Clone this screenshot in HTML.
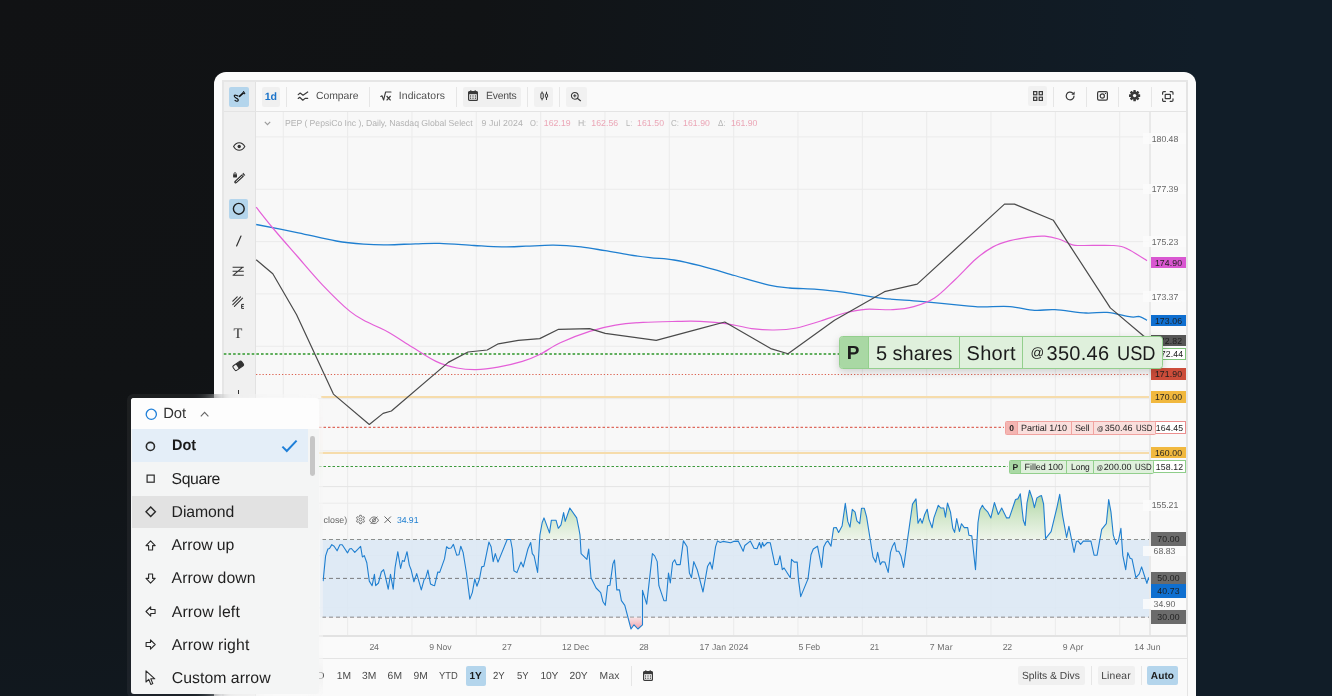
<!DOCTYPE html>
<html><head><meta charset="utf-8"><title>Chart</title>
<style>
html,body{margin:0;padding:0}
body{width:1332px;height:696px;overflow:hidden;position:relative;
 background:#111c27 radial-gradient(ellipse 1200px 1000px at 0 0,#111214 0%,#111315 40%,#111d28 100%);
 font-family:"Liberation Sans",sans-serif;}
.t{position:absolute;white-space:nowrap;text-rendering:geometricPrecision;}
.b{position:absolute;}
svg{position:absolute;overflow:visible}
#wrap{position:absolute;left:0;top:0;width:1332px;height:696px;will-change:transform;}
</style></head><body><div id="wrap">
<div class="b" style="left:214.0px;top:72.0px;width:982.0px;height:648.0px;background:#fbfbfb;border-radius:12px;"></div>
<div class="b" style="left:222.0px;top:80.0px;width:966.0px;height:640.0px;background:#e6e6e6;"></div>
<div class="b" style="left:223.5px;top:81.5px;width:963.0px;height:638.5px;background:#fafafa;"></div>
<div class="b" style="left:223.5px;top:81.5px;width:31.5px;height:638.5px;background:#f0f0f0;"></div>
<div class="b" style="left:255.0px;top:81.5px;width:1.0px;height:638.5px;background:#e2e2e2;"></div>
<div class="b" style="left:256.0px;top:81.5px;width:930.5px;height:29.0px;background:#fafafa;"></div>
<div class="b" style="left:223.5px;top:110.5px;width:963.0px;height:1.5px;background:#e4e4e4;"></div>
<div class="b" style="left:256.0px;top:112.0px;width:894.0px;height:523.5px;background:#f8f8f8;"></div>
<svg width="1332" height="696" viewBox="0 0 1332 696" style="left:0;top:0">
<defs><clipPath id="cp"><rect x="256" y="112" width="894" height="523.5"/></clipPath>
<linearGradient id="gg" gradientUnits="userSpaceOnUse" x1="0" y1="488" x2="0" y2="539.5"><stop offset="0" stop-color="#93c983" stop-opacity=".85"/><stop offset="1" stop-color="#e6f2e0" stop-opacity=".6"/></linearGradient>
<linearGradient id="rg" gradientUnits="userSpaceOnUse" x1="0" y1="617.2" x2="0" y2="629"><stop offset="0" stop-color="#f8dadd" stop-opacity=".7"/><stop offset="1" stop-color="#ee9aa6" stop-opacity=".95"/></linearGradient>
<clipPath id="c70"><rect x="256" y="480" width="894" height="59.5"/></clipPath>
<clipPath id="c30"><rect x="256" y="617.2" width="894" height="30"/></clipPath>
</defs>
<g stroke="#ebebeb" stroke-width="1">
<line x1="283.3" y1="112" x2="283.3" y2="635.5"/><line x1="347.6" y1="112" x2="347.6" y2="635.5"/><line x1="412.0" y1="112" x2="412.0" y2="635.5"/><line x1="476.3" y1="112" x2="476.3" y2="635.5"/><line x1="540.7" y1="112" x2="540.7" y2="635.5"/><line x1="605.0" y1="112" x2="605.0" y2="635.5"/><line x1="669.3" y1="112" x2="669.3" y2="635.5"/><line x1="733.7" y1="112" x2="733.7" y2="635.5"/><line x1="798.0" y1="112" x2="798.0" y2="635.5"/><line x1="862.4" y1="112" x2="862.4" y2="635.5"/><line x1="926.7" y1="112" x2="926.7" y2="635.5"/><line x1="991.0" y1="112" x2="991.0" y2="635.5"/><line x1="1055.4" y1="112" x2="1055.4" y2="635.5"/><line x1="1119.7" y1="112" x2="1119.7" y2="635.5"/><line x1="256" y1="136.9" x2="1150" y2="136.9"/><line x1="256" y1="189.3" x2="1150" y2="189.3"/><line x1="256" y1="241.6" x2="1150" y2="241.6"/><line x1="256" y1="293.9" x2="1150" y2="293.9"/><line x1="256" y1="346.3" x2="1150" y2="346.3"/><line x1="256" y1="398.6" x2="1150" y2="398.6"/><line x1="256" y1="450.9" x2="1150" y2="450.9"/><line x1="256" y1="503.2" x2="1150" y2="503.2"/><line x1="256" y1="555.6" x2="1150" y2="555.6"/><line x1="256" y1="607.9" x2="1150" y2="607.9"/><line x1="256" y1="486.6" x2="1150" y2="486.6" stroke="#e4e4e4"/></g>
<rect x="320" y="539.5" width="830" height="77.7" fill="#dbe8f5" opacity=".85"/>
<line x1="223.8" y1="354.1" x2="840" y2="354.1" stroke="#5fae5c" stroke-width="2" stroke-dasharray="2.6 2.05"/>
<line x1="256" y1="374.5" x2="1150" y2="374.5" stroke="#dc6453" stroke-width="1.1" stroke-dasharray="1.3 1.95"/>
<line x1="321" y1="397" x2="1150" y2="397" stroke="#f6dcab" stroke-width="2"/>
<line x1="256" y1="427.4" x2="1004" y2="427.4" stroke="#de6a5e" stroke-width="1.1" stroke-dasharray="2.5 2"/>
<line x1="256" y1="452.9" x2="1150" y2="452.9" stroke="#f6dcab" stroke-width="2"/>
<line x1="256" y1="466.5" x2="1008" y2="466.5" stroke="#3c9a3c" stroke-width="1.1" stroke-dasharray="2.5 2"/>
<line x1="322" y1="539.5" x2="1150" y2="539.5" stroke="#6a6a6a" stroke-opacity=".85" stroke-width="1" stroke-dasharray="4 3"/>
<line x1="322" y1="578.4" x2="1150" y2="578.4" stroke="#6a6a6a" stroke-opacity=".85" stroke-width="1" stroke-dasharray="4 3"/>
<line x1="322" y1="617.2" x2="1150" y2="617.2" stroke="#6a6a6a" stroke-opacity=".85" stroke-width="1" stroke-dasharray="4 3"/>
<path fill="none" stroke="#1f7fd0" stroke-width="1.3" d="M256.2 224.5 C263.2 225.9 285.0 230.1 298.3 232.8 C311.6 235.6 325.3 239.1 336.2 241.0 C347.1 242.9 355.2 243.5 363.8 244.1 C372.4 244.7 379.4 244.9 388.0 244.8 C396.6 244.8 406.9 244.0 415.5 243.8 C424.1 243.6 429.9 243.1 439.7 243.4 C449.4 243.7 463.7 244.9 474.0 245.5 C484.3 246.1 493.1 246.8 501.7 246.9 C510.3 247.0 517.3 246.5 525.9 246.2 C534.5 245.9 544.2 245.1 553.4 245.2 C562.6 245.3 572.4 246.0 581.0 246.9 C589.6 247.8 597.2 249.4 605.2 250.7 C613.2 252.0 621.8 253.7 629.3 254.8 C636.8 256.0 642.5 256.7 650.0 257.6 C657.5 258.5 665.7 258.6 674.0 260.0 C682.3 261.4 689.9 263.1 700.0 265.7 C710.1 268.3 723.0 272.2 734.5 275.5 C746.0 278.8 759.8 283.1 769.0 285.2 C778.2 287.3 781.7 287.3 789.7 288.0 C797.7 288.7 807.8 288.6 817.0 289.3 C826.2 290.0 833.8 290.9 844.8 292.4 C855.8 293.9 870.1 296.8 882.8 298.3 C895.4 299.8 906.3 300.1 920.7 301.4 C935.1 302.7 958.6 305.3 969.0 306.2 C979.4 307.1 976.0 306.8 982.8 306.9 C989.6 307.0 1001.4 306.0 1010.0 306.6 C1018.6 307.2 1027.0 309.8 1034.5 310.3 C1042.0 310.8 1046.4 309.2 1055.0 309.7 C1063.6 310.1 1077.3 312.6 1086.0 313.0 C1094.7 313.4 1099.5 311.8 1107.0 312.4 C1114.5 313.0 1125.5 316.2 1131.0 316.9 C1136.5 317.6 1137.0 316.0 1139.7 316.6 C1142.4 317.2 1145.8 319.7 1147.0 320.3"/>
<path fill="none" stroke="#e45fd8" stroke-width="1.2" d="M256.2 207.2 C259.0 210.7 266.1 219.9 272.8 228.0 C279.5 236.1 288.3 246.0 296.6 255.5 C304.9 265.0 313.5 275.5 322.4 284.8 C331.3 294.1 342.5 305.2 350.0 311.4 C357.5 317.6 360.9 318.6 367.2 322.0 C373.5 325.4 380.5 327.8 388.0 332.0 C395.5 336.2 404.0 342.1 412.0 347.0 C420.0 351.9 428.5 357.9 436.0 361.4 C443.5 364.9 450.3 366.6 457.0 368.0 C463.7 369.4 469.2 369.8 476.0 369.7 C482.8 369.6 490.3 368.6 498.0 367.2 C505.7 365.8 515.4 363.5 522.4 361.4 C529.4 359.3 533.4 357.6 539.7 354.5 C546.0 351.4 552.0 346.7 560.3 342.8 C568.6 338.9 580.5 334.3 589.7 331.4 C598.9 328.5 606.6 326.7 615.5 325.2 C624.4 323.7 632.6 323.0 643.0 322.4 C653.4 321.8 668.1 321.6 677.6 321.4 C687.1 321.2 691.7 321.0 700.0 321.4 C708.3 321.8 719.0 322.6 727.6 323.8 C736.2 325.0 744.0 327.6 751.7 328.6 C759.4 329.6 766.5 330.1 774.0 330.0 C781.5 329.9 788.8 329.5 796.6 328.0 C804.4 326.5 812.7 323.5 820.7 321.0 C828.7 318.5 837.3 314.9 844.8 313.0 C852.3 311.1 857.5 309.9 865.5 309.3 C873.5 308.8 885.0 310.1 893.0 309.7 C901.0 309.2 906.9 308.6 913.8 306.6 C920.7 304.7 927.6 302.5 934.5 298.0 C941.4 293.5 948.1 286.2 955.0 279.7 C961.9 273.2 969.6 264.5 975.9 259.0 C982.2 253.5 987.3 250.0 993.0 246.9 C998.7 243.8 1003.7 242.4 1010.0 240.7 C1016.3 239.0 1025.2 237.7 1031.0 236.9 C1036.8 236.2 1040.2 235.8 1044.8 236.2 C1049.4 236.5 1054.0 237.6 1058.6 239.0 C1063.2 240.4 1068.4 243.7 1072.4 244.8 C1076.4 245.9 1075.9 245.4 1082.8 245.5 C1089.7 245.6 1106.3 244.9 1113.8 245.5 C1121.3 246.1 1122.1 246.5 1127.6 249.0 C1133.1 251.5 1143.8 258.8 1147.0 260.7"/>
<polyline fill="none" stroke="#4a4a4a" stroke-width="1.2" stroke-linejoin="round" points="256.2,259.7 272.8,273.8 296.6,314.8 333.4,394.1 369.3,424.5 383.1,413.4 391.4,411.0 448.3,362.4 468.0,352.0 487.2,350.0 498.3,343.8 518.3,340.3 539.7,338.6 558.6,329.3 589.7,328.6 605.2,333.4 656.2,340.3 700.0,328.6 724.8,322.0 770.7,348.6 788.0,353.8 834.5,320.3 884.5,291.7 917.2,284.1 1004.5,204.1 1014.5,204.1 1053.4,220.3 1110.3,307.9 1143.0,335.5 1150.0,341.0"/>
<polygon points="323.1,539.5 323.1,581.1 325.6,555.9 327.9,549.0 329.5,548.5 331.8,544.6 334.1,546.2 337.1,550.8 339.9,544.8 342.2,544.8 344.5,548.3 347.5,552.9 349.5,549.0 351.4,548.5 354.8,552.4 360.6,546.4 362.4,557.0 364.3,555.6 366.8,562.8 369.3,581.1 372.1,585.7 374.4,574.3 375.7,585.7 378.5,583.0 381.3,572.0 383.6,569.7 385.4,576.6 388.2,589.2 390.5,574.3 393.2,589.2 395.1,567.4 397.8,551.7 400.6,568.5 402.4,560.5 404.3,561.4 407.0,551.7 409.3,565.1 411.1,569.7 413.9,581.8 416.7,573.6 421.3,589.9 424.3,578.9 425.6,578.4 427.9,570.1 430.5,583.9 433.0,585.3 434.6,585.7 437.8,572.0 439.7,572.4 444.5,558.9 446.6,546.7 448.6,548.5 451.1,548.0 453.4,544.4 456.7,555.2 459.0,554.7 460.8,546.2 463.1,552.4 466.3,572.0 469.8,599.1 472.3,592.6 474.8,578.9 476.9,586.2 479.4,579.3 481.7,566.9 484.0,566.2 488.9,542.1 491.1,546.7 493.2,561.6 495.3,553.6 498.0,562.1 507.2,539.5 510.5,539.5 512.3,549.0 513.9,570.8 516.9,572.6 521.0,562.1 523.3,566.9 527.9,549.0 530.7,542.5 532.3,553.6 534.1,555.9 537.6,572.4 539.9,535.2 542.2,522.5 544.0,517.9 549.5,532.9 551.4,520.2 556.0,520.2 558.3,528.3 561.0,524.8 563.6,512.6 565.2,521.4 569.8,508.0 576.7,517.9 579.0,529.4 580.0,535.2 581.1,553.6 586.9,559.3 588.7,549.0 591.0,577.7 596.1,588.0 600.7,592.6 603.0,601.8 605.3,605.3 607.6,585.7 609.9,585.3 612.9,563.9 614.5,560.0 616.8,589.9 619.5,589.9 621.4,600.7 624.8,605.3 631.0,629.0 634.0,624.8 637.9,629.0 642.5,624.8 642.5,590.3 646.7,604.1 652.4,553.6 654.7,555.9 657.2,561.6 658.9,585.7 663.9,600.7 666.2,600.7 668.5,573.1 670.3,583.0 672.6,562.8 674.7,559.8 676.6,564.6 680.2,564.6 683.4,540.9 687.1,546.7 689.4,573.1 691.5,577.7 693.8,561.6 697.2,569.7 703.0,592.0 707.6,566.2 710.1,562.1 712.2,569.2 715.6,546.7 717.5,540.9 720.2,542.5 723.0,541.4 730.6,542.8 733.6,541.4 738.2,541.1 743.2,551.3 744.8,545.5 750.3,541.1 754.0,548.3 757.0,548.7 759.5,542.5 761.1,548.0 762.5,542.5 763.9,546.2 767.4,542.5 770.3,542.8 774.9,564.6 777.7,564.4 780.0,555.9 782.3,569.7 784.1,568.0 790.3,577.7 791.5,559.3 794.3,562.1 797.2,562.1 798.4,578.9 800.7,596.6 808.0,578.9 811.0,554.7 813.3,549.0 817.5,546.2 821.6,567.4 823.7,547.1 826.0,542.5 827.8,540.9 831.0,546.2 833.6,527.8 836.3,527.6 838.6,532.4 842.1,526.0 845.3,503.4 847.8,521.4 850.0,527.1 852.3,509.4 855.1,512.2 856.9,520.9 859.7,523.7 861.5,508.3 864.3,508.3 866.6,516.8 873.0,557.0 875.7,562.3 877.6,552.4 880.3,564.6 882.2,561.8 884.9,562.1 888.2,572.4 890.5,552.4 892.5,546.2 894.6,542.5 896.4,551.3 898.7,551.3 901.0,555.9 903.6,567.4 912.5,504.1 916.0,498.9 918.0,523.2 920.3,518.6 922.2,523.2 924.7,514.5 927.2,509.2 928.9,519.1 932.1,527.8 933.9,517.9 938.3,505.3 940.8,508.0 943.8,508.0 945.4,517.2 947.5,503.0 950.5,512.2 952.8,528.3 954.6,532.4 956.7,518.6 959.4,531.5 961.5,523.7 964.3,527.6 967.7,527.6 968.9,535.2 971.8,535.9 975.5,569.7 978.0,522.5 979.9,509.9 982.4,505.3 984.5,508.7 987.9,512.2 990.9,517.9 994.4,502.5 998.3,514.5 1001.7,508.0 1006.6,517.9 1009.3,517.9 1015.5,499.5 1017.8,498.9 1020.3,493.8 1023.3,520.2 1025.2,525.5 1027.0,503.0 1029.5,490.3 1032.3,498.4 1034.4,507.6 1036.9,497.9 1039.0,496.6 1041.5,495.6 1043.6,504.1 1045.6,538.6 1051.1,531.7 1056.9,507.6 1059.7,494.3 1062.6,515.6 1066.6,537.5 1068.9,526.4 1074.1,552.4 1076.4,541.4 1078.0,540.9 1080.6,544.4 1083.3,541.1 1090.9,541.1 1094.1,555.2 1097.1,555.2 1101.7,529.4 1106.3,523.7 1108.7,499.5 1111.0,512.2 1113.3,535.2 1116.3,544.4 1118.4,540.9 1120.9,528.3 1122.8,555.4 1125.7,569.7 1127.8,552.6 1130.1,558.2 1132.0,558.9 1135.9,577.7 1139.3,573.8 1141.6,566.9 1146.9,583.4 1148.5,577.7 1150.1,582.3 1150.1,539.5" fill="url(#gg)" clip-path="url(#c70)"/>
<polygon points="323.1,617.2 323.1,581.1 325.6,555.9 327.9,549.0 329.5,548.5 331.8,544.6 334.1,546.2 337.1,550.8 339.9,544.8 342.2,544.8 344.5,548.3 347.5,552.9 349.5,549.0 351.4,548.5 354.8,552.4 360.6,546.4 362.4,557.0 364.3,555.6 366.8,562.8 369.3,581.1 372.1,585.7 374.4,574.3 375.7,585.7 378.5,583.0 381.3,572.0 383.6,569.7 385.4,576.6 388.2,589.2 390.5,574.3 393.2,589.2 395.1,567.4 397.8,551.7 400.6,568.5 402.4,560.5 404.3,561.4 407.0,551.7 409.3,565.1 411.1,569.7 413.9,581.8 416.7,573.6 421.3,589.9 424.3,578.9 425.6,578.4 427.9,570.1 430.5,583.9 433.0,585.3 434.6,585.7 437.8,572.0 439.7,572.4 444.5,558.9 446.6,546.7 448.6,548.5 451.1,548.0 453.4,544.4 456.7,555.2 459.0,554.7 460.8,546.2 463.1,552.4 466.3,572.0 469.8,599.1 472.3,592.6 474.8,578.9 476.9,586.2 479.4,579.3 481.7,566.9 484.0,566.2 488.9,542.1 491.1,546.7 493.2,561.6 495.3,553.6 498.0,562.1 507.2,539.5 510.5,539.5 512.3,549.0 513.9,570.8 516.9,572.6 521.0,562.1 523.3,566.9 527.9,549.0 530.7,542.5 532.3,553.6 534.1,555.9 537.6,572.4 539.9,535.2 542.2,522.5 544.0,517.9 549.5,532.9 551.4,520.2 556.0,520.2 558.3,528.3 561.0,524.8 563.6,512.6 565.2,521.4 569.8,508.0 576.7,517.9 579.0,529.4 580.0,535.2 581.1,553.6 586.9,559.3 588.7,549.0 591.0,577.7 596.1,588.0 600.7,592.6 603.0,601.8 605.3,605.3 607.6,585.7 609.9,585.3 612.9,563.9 614.5,560.0 616.8,589.9 619.5,589.9 621.4,600.7 624.8,605.3 631.0,629.0 634.0,624.8 637.9,629.0 642.5,624.8 642.5,590.3 646.7,604.1 652.4,553.6 654.7,555.9 657.2,561.6 658.9,585.7 663.9,600.7 666.2,600.7 668.5,573.1 670.3,583.0 672.6,562.8 674.7,559.8 676.6,564.6 680.2,564.6 683.4,540.9 687.1,546.7 689.4,573.1 691.5,577.7 693.8,561.6 697.2,569.7 703.0,592.0 707.6,566.2 710.1,562.1 712.2,569.2 715.6,546.7 717.5,540.9 720.2,542.5 723.0,541.4 730.6,542.8 733.6,541.4 738.2,541.1 743.2,551.3 744.8,545.5 750.3,541.1 754.0,548.3 757.0,548.7 759.5,542.5 761.1,548.0 762.5,542.5 763.9,546.2 767.4,542.5 770.3,542.8 774.9,564.6 777.7,564.4 780.0,555.9 782.3,569.7 784.1,568.0 790.3,577.7 791.5,559.3 794.3,562.1 797.2,562.1 798.4,578.9 800.7,596.6 808.0,578.9 811.0,554.7 813.3,549.0 817.5,546.2 821.6,567.4 823.7,547.1 826.0,542.5 827.8,540.9 831.0,546.2 833.6,527.8 836.3,527.6 838.6,532.4 842.1,526.0 845.3,503.4 847.8,521.4 850.0,527.1 852.3,509.4 855.1,512.2 856.9,520.9 859.7,523.7 861.5,508.3 864.3,508.3 866.6,516.8 873.0,557.0 875.7,562.3 877.6,552.4 880.3,564.6 882.2,561.8 884.9,562.1 888.2,572.4 890.5,552.4 892.5,546.2 894.6,542.5 896.4,551.3 898.7,551.3 901.0,555.9 903.6,567.4 912.5,504.1 916.0,498.9 918.0,523.2 920.3,518.6 922.2,523.2 924.7,514.5 927.2,509.2 928.9,519.1 932.1,527.8 933.9,517.9 938.3,505.3 940.8,508.0 943.8,508.0 945.4,517.2 947.5,503.0 950.5,512.2 952.8,528.3 954.6,532.4 956.7,518.6 959.4,531.5 961.5,523.7 964.3,527.6 967.7,527.6 968.9,535.2 971.8,535.9 975.5,569.7 978.0,522.5 979.9,509.9 982.4,505.3 984.5,508.7 987.9,512.2 990.9,517.9 994.4,502.5 998.3,514.5 1001.7,508.0 1006.6,517.9 1009.3,517.9 1015.5,499.5 1017.8,498.9 1020.3,493.8 1023.3,520.2 1025.2,525.5 1027.0,503.0 1029.5,490.3 1032.3,498.4 1034.4,507.6 1036.9,497.9 1039.0,496.6 1041.5,495.6 1043.6,504.1 1045.6,538.6 1051.1,531.7 1056.9,507.6 1059.7,494.3 1062.6,515.6 1066.6,537.5 1068.9,526.4 1074.1,552.4 1076.4,541.4 1078.0,540.9 1080.6,544.4 1083.3,541.1 1090.9,541.1 1094.1,555.2 1097.1,555.2 1101.7,529.4 1106.3,523.7 1108.7,499.5 1111.0,512.2 1113.3,535.2 1116.3,544.4 1118.4,540.9 1120.9,528.3 1122.8,555.4 1125.7,569.7 1127.8,552.6 1130.1,558.2 1132.0,558.9 1135.9,577.7 1139.3,573.8 1141.6,566.9 1146.9,583.4 1148.5,577.7 1150.1,582.3 1150.1,617.2" fill="url(#rg)" clip-path="url(#c30)"/>
<polyline fill="none" stroke="#1f7fd0" stroke-width="1.1" stroke-linejoin="round" points="323.1,581.1 325.6,555.9 327.9,549.0 329.5,548.5 331.8,544.6 334.1,546.2 337.1,550.8 339.9,544.8 342.2,544.8 344.5,548.3 347.5,552.9 349.5,549.0 351.4,548.5 354.8,552.4 360.6,546.4 362.4,557.0 364.3,555.6 366.8,562.8 369.3,581.1 372.1,585.7 374.4,574.3 375.7,585.7 378.5,583.0 381.3,572.0 383.6,569.7 385.4,576.6 388.2,589.2 390.5,574.3 393.2,589.2 395.1,567.4 397.8,551.7 400.6,568.5 402.4,560.5 404.3,561.4 407.0,551.7 409.3,565.1 411.1,569.7 413.9,581.8 416.7,573.6 421.3,589.9 424.3,578.9 425.6,578.4 427.9,570.1 430.5,583.9 433.0,585.3 434.6,585.7 437.8,572.0 439.7,572.4 444.5,558.9 446.6,546.7 448.6,548.5 451.1,548.0 453.4,544.4 456.7,555.2 459.0,554.7 460.8,546.2 463.1,552.4 466.3,572.0 469.8,599.1 472.3,592.6 474.8,578.9 476.9,586.2 479.4,579.3 481.7,566.9 484.0,566.2 488.9,542.1 491.1,546.7 493.2,561.6 495.3,553.6 498.0,562.1 507.2,539.5 510.5,539.5 512.3,549.0 513.9,570.8 516.9,572.6 521.0,562.1 523.3,566.9 527.9,549.0 530.7,542.5 532.3,553.6 534.1,555.9 537.6,572.4 539.9,535.2 542.2,522.5 544.0,517.9 549.5,532.9 551.4,520.2 556.0,520.2 558.3,528.3 561.0,524.8 563.6,512.6 565.2,521.4 569.8,508.0 576.7,517.9 579.0,529.4 580.0,535.2 581.1,553.6 586.9,559.3 588.7,549.0 591.0,577.7 596.1,588.0 600.7,592.6 603.0,601.8 605.3,605.3 607.6,585.7 609.9,585.3 612.9,563.9 614.5,560.0 616.8,589.9 619.5,589.9 621.4,600.7 624.8,605.3 631.0,629.0 634.0,624.8 637.9,629.0 642.5,624.8 642.5,590.3 646.7,604.1 652.4,553.6 654.7,555.9 657.2,561.6 658.9,585.7 663.9,600.7 666.2,600.7 668.5,573.1 670.3,583.0 672.6,562.8 674.7,559.8 676.6,564.6 680.2,564.6 683.4,540.9 687.1,546.7 689.4,573.1 691.5,577.7 693.8,561.6 697.2,569.7 703.0,592.0 707.6,566.2 710.1,562.1 712.2,569.2 715.6,546.7 717.5,540.9 720.2,542.5 723.0,541.4 730.6,542.8 733.6,541.4 738.2,541.1 743.2,551.3 744.8,545.5 750.3,541.1 754.0,548.3 757.0,548.7 759.5,542.5 761.1,548.0 762.5,542.5 763.9,546.2 767.4,542.5 770.3,542.8 774.9,564.6 777.7,564.4 780.0,555.9 782.3,569.7 784.1,568.0 790.3,577.7 791.5,559.3 794.3,562.1 797.2,562.1 798.4,578.9 800.7,596.6 808.0,578.9 811.0,554.7 813.3,549.0 817.5,546.2 821.6,567.4 823.7,547.1 826.0,542.5 827.8,540.9 831.0,546.2 833.6,527.8 836.3,527.6 838.6,532.4 842.1,526.0 845.3,503.4 847.8,521.4 850.0,527.1 852.3,509.4 855.1,512.2 856.9,520.9 859.7,523.7 861.5,508.3 864.3,508.3 866.6,516.8 873.0,557.0 875.7,562.3 877.6,552.4 880.3,564.6 882.2,561.8 884.9,562.1 888.2,572.4 890.5,552.4 892.5,546.2 894.6,542.5 896.4,551.3 898.7,551.3 901.0,555.9 903.6,567.4 912.5,504.1 916.0,498.9 918.0,523.2 920.3,518.6 922.2,523.2 924.7,514.5 927.2,509.2 928.9,519.1 932.1,527.8 933.9,517.9 938.3,505.3 940.8,508.0 943.8,508.0 945.4,517.2 947.5,503.0 950.5,512.2 952.8,528.3 954.6,532.4 956.7,518.6 959.4,531.5 961.5,523.7 964.3,527.6 967.7,527.6 968.9,535.2 971.8,535.9 975.5,569.7 978.0,522.5 979.9,509.9 982.4,505.3 984.5,508.7 987.9,512.2 990.9,517.9 994.4,502.5 998.3,514.5 1001.7,508.0 1006.6,517.9 1009.3,517.9 1015.5,499.5 1017.8,498.9 1020.3,493.8 1023.3,520.2 1025.2,525.5 1027.0,503.0 1029.5,490.3 1032.3,498.4 1034.4,507.6 1036.9,497.9 1039.0,496.6 1041.5,495.6 1043.6,504.1 1045.6,538.6 1051.1,531.7 1056.9,507.6 1059.7,494.3 1062.6,515.6 1066.6,537.5 1068.9,526.4 1074.1,552.4 1076.4,541.4 1078.0,540.9 1080.6,544.4 1083.3,541.1 1090.9,541.1 1094.1,555.2 1097.1,555.2 1101.7,529.4 1106.3,523.7 1108.7,499.5 1111.0,512.2 1113.3,535.2 1116.3,544.4 1118.4,540.9 1120.9,528.3 1122.8,555.4 1125.7,569.7 1127.8,552.6 1130.1,558.2 1132.0,558.9 1135.9,577.7 1139.3,573.8 1141.6,566.9 1146.9,583.4 1148.5,577.7 1150.1,582.3"/>
</svg>
<div class="b" style="left:229.0px;top:86.7px;width:20.0px;height:19.9px;background:#b4d5ec;border-radius:2px;"></div>
<svg style="left:232.0px;top:90.0px" width="14" height="13" viewBox="0 0 14 13"><path d="M5.9 6 C4.6 5 2.2 4.8 2.2 6 C2.2 7.4 4.2 8 5.4 8.8 C6.8 9.8 6.4 11.2 5 11.3 C4.2 11.3 3.4 10.8 3 10.4" fill="none" stroke="#111" stroke-width="1.1" stroke-linecap="round"/><path d="M7.5 6.3 L10.5 3.7" stroke="#111" stroke-width="1.7" stroke-linecap="round"/><path d="M11.6 1.3 L13 3.8 L10.4 3.4 Z" fill="#6d8596" stroke="#111" stroke-width=".9" stroke-linejoin="round"/></svg>
<div class="b" style="left:261.6px;top:86.7px;width:18.5px;height:19.9px;background:#f0f0f0;border-radius:2px;"></div>
<div class="t" style="left:264.8px;top:90.0px;font-size:10.6px;line-height:14px;letter-spacing:-0.169px;color:#1a73c9;font-weight:bold;">1d</div>
<div class="b" style="left:285.8px;top:86.7px;width:1.0px;height:19.9px;background:#e6e6e6;"></div>
<svg style="left:297.0px;top:90.0px" width="12" height="12" viewBox="0 0 12 12"><path d="M1.2 4.6 L3.2 3 L6 5.2 L10.7 2 M1.2 8.4 L2.7 7.3 L5.8 10.2 L8.1 8.4 L10.7 8.3" fill="none" stroke="#3a3a3a" stroke-width="1.2" stroke-linecap="round" stroke-linejoin="round"/></svg>
<div class="t" style="left:316.0px;top:90.0px;font-size:10.4px;line-height:14px;letter-spacing:-0.045px;color:#4e4e4e;">Compare</div>
<div class="b" style="left:368.9px;top:86.7px;width:1.0px;height:19.9px;background:#e6e6e6;"></div>
<svg style="left:380.0px;top:90.0px" width="12" height="12" viewBox="0 0 12 12"><path d="M0.8 6.4 L2 5.8 L3.6 10 L5.6 2 L11 2" fill="none" stroke="#3a3a3a" stroke-width="1.1" stroke-linejoin="round" stroke-linecap="round"/><path d="M6.6 6 L10.6 10.4 M10.6 6 L6.6 10.4" stroke="#3a3a3a" stroke-width="1.2"/></svg>
<div class="t" style="left:398.8px;top:90.0px;font-size:10.4px;line-height:14px;letter-spacing:0.124px;color:#4e4e4e;">Indicators</div>
<div class="b" style="left:455.9px;top:86.7px;width:1.0px;height:19.9px;background:#e6e6e6;"></div>
<div class="b" style="left:463.1px;top:86.7px;width:57.6px;height:19.9px;background:#f0f0f0;border-radius:2px;"></div>
<svg style="left:468.0px;top:90.3px" width="10" height="11" viewBox="0 0 10 11"><rect x="0.6" y="1.6" width="8.8" height="8.8" rx="1" fill="none" stroke="#3a3a3a" stroke-width="1.2"/><rect x="0.6" y="1.6" width="8.8" height="2.6" fill="#3a3a3a"/><path d="M2.8 0.2v2 M7.2 0.2v2" stroke="#3a3a3a" stroke-width="1.2"/><g fill="#3a3a3a"><rect x="2" y="5.4" width="1.2" height="1.2"/><rect x="4.4" y="5.4" width="1.2" height="1.2"/><rect x="6.8" y="5.4" width="1.2" height="1.2"/><rect x="2" y="7.6" width="1.2" height="1.2"/><rect x="4.4" y="7.6" width="1.2" height="1.2"/><rect x="6.8" y="7.6" width="1.2" height="1.2"/></g></svg>
<div class="t" style="left:485.9px;top:90.0px;font-size:10.4px;line-height:14px;letter-spacing:-0.179px;color:#4e4e4e;">Events</div>
<div class="b" style="left:526.5px;top:86.7px;width:1.0px;height:19.9px;background:#e6e6e6;"></div>
<div class="b" style="left:534.2px;top:86.7px;width:18.9px;height:19.9px;background:#f1f1f1;border-radius:2px;"></div>
<svg style="left:539.8px;top:91.3px" width="9" height="9.9" viewBox="0 0 10 11"><rect x="1" y="2.4" width="2.6" height="6" rx=".6" fill="none" stroke="#2a2a2a" stroke-width="1.05"/><path d="M2.3 0.6v1.8 M2.3 8.4v2" stroke="#2a2a2a" stroke-width="1.05"/><rect x="6" y="3.4" width="2.4" height="3.6" rx=".6" fill="none" stroke="#2a2a2a" stroke-width="1.05"/><path d="M7.2 0.8v2.6 M7.2 7v3" stroke="#2a2a2a" stroke-width="1.05"/></svg>
<div class="b" style="left:558.9px;top:86.7px;width:1.0px;height:19.9px;background:#e6e6e6;"></div>
<div class="b" style="left:566.1px;top:86.7px;width:21.0px;height:19.9px;background:#f1f1f1;border-radius:2px;"></div>
<svg style="left:569.7px;top:89.6px" width="12" height="12" viewBox="0 0 12 12"><circle cx="4.8" cy="5.8" r="3.4" fill="none" stroke="#3a3a3a" stroke-width="1.05"/><path d="M7.3 8.3 L10.5 10.7" stroke="#3a3a3a" stroke-width="1.2" stroke-linecap="round"/><path d="M3.2 5.8h3.2 M4.8 4.2v3.2" stroke="#3a3a3a" stroke-width="1"/></svg>
<div class="b" style="left:1028.3px;top:86.4px;width:18.9px;height:19.2px;background:#f1f1f1;border-radius:2px;"></div>
<svg style="left:1032.8px;top:91.2px" width="10" height="10" viewBox="0 0 10 10"><g fill="none" stroke="#3a3a3a" stroke-width="1.2"><rect x=".6" y=".6" width="3.2" height="3.2"/><rect x="6.2" y=".6" width="3.2" height="3.2"/><rect x=".6" y="6.2" width="3.2" height="3.2"/><rect x="6.2" y="6.2" width="3.2" height="3.2"/></g></svg>
<div class="b" style="left:1052.9px;top:86.7px;width:1.0px;height:19.9px;background:#e6e6e6;"></div>
<svg style="left:1065.0px;top:91.0px" width="11" height="10" viewBox="0 0 11 10"><path d="M9 5 A3.9 3.9 0 1 1 7.6 2" fill="none" stroke="#3a3a3a" stroke-width="1.2" stroke-linecap="round"/><path d="M9.6 0.6 V3.8 H6.4 Z" fill="#3a3a3a"/></svg>
<div class="b" style="left:1085.9px;top:86.7px;width:1.0px;height:19.9px;background:#e6e6e6;"></div>
<svg style="left:1097.0px;top:91.0px" width="11" height="10" viewBox="0 0 11 10"><rect x=".6" y=".6" width="9.8" height="8.6" rx="1.4" fill="none" stroke="#3a3a3a" stroke-width="1.2"/><circle cx="5.3" cy="5" r="2.1" fill="none" stroke="#3a3a3a" stroke-width="1.2"/><circle cx="8.5" cy="2.4" r=".7" fill="#3a3a3a"/></svg>
<div class="b" style="left:1117.8px;top:86.7px;width:1.0px;height:19.9px;background:#e6e6e6;"></div>
<svg style="left:1129.3px;top:90.4px" width="11.2" height="11.2" viewBox="0 0 11.2 11.2"><g transform="translate(5.6 5.6)" fill="#3a3a3a"><circle r="3.9"/><rect x="-1.3" y="-5.6" width="2.6" height="3" rx=".5" transform="rotate(0)"/><rect x="-1.3" y="-5.6" width="2.6" height="3" rx=".5" transform="rotate(45)"/><rect x="-1.3" y="-5.6" width="2.6" height="3" rx=".5" transform="rotate(90)"/><rect x="-1.3" y="-5.6" width="2.6" height="3" rx=".5" transform="rotate(135)"/><rect x="-1.3" y="-5.6" width="2.6" height="3" rx=".5" transform="rotate(180)"/><rect x="-1.3" y="-5.6" width="2.6" height="3" rx=".5" transform="rotate(225)"/><rect x="-1.3" y="-5.6" width="2.6" height="3" rx=".5" transform="rotate(270)"/><rect x="-1.3" y="-5.6" width="2.6" height="3" rx=".5" transform="rotate(315)"/><circle r="1.7" fill="#fafafa"/></g></svg>
<div class="b" style="left:1150.7px;top:86.7px;width:1.0px;height:19.9px;background:#e6e6e6;"></div>
<svg style="left:1161.8px;top:90.6px" width="11.6" height="11" viewBox="0 0 11.6 11"><path d="M.6 3.2V1.8A1.2 1.2 0 0 1 1.8 .6H3.4 M8.2 .6H9.8A1.2 1.2 0 0 1 11 1.8V3.2 M11 7.8V9.2A1.2 1.2 0 0 1 9.8 10.4H8.2 M3.4 10.4H1.8A1.2 1.2 0 0 1 .6 9.2V7.8" fill="none" stroke="#3a3a3a" stroke-width="1.2" stroke-linecap="round"/><rect x="3.2" y="3.4" width="5.2" height="4.2" rx=".6" fill="none" stroke="#3a3a3a" stroke-width="1.2"/></svg>
<svg style="left:264.0px;top:120.5px" width="7" height="5" viewBox="0 0 7 5"><path d="M.8 .8 L3.5 3.6 L6.2 .8" fill="none" stroke="#9c9c9c" stroke-width="1.2"/></svg>
<div class="t" style="left:284.9px;top:118.0px;font-size:8.7px;line-height:11px;letter-spacing:-0.038px;color:#b3b3b3;">PEP ( PepsiCo Inc ), Daily, Nasdaq Global Select</div>
<div class="t" style="left:481.6px;top:118.0px;font-size:8.7px;line-height:11px;letter-spacing:0.117px;color:#b3b3b3;">9 Jul 2024</div>
<div class="t" style="left:530.4px;top:118.0px;font-size:8.7px;line-height:11px;letter-spacing:0.000px;color:#b3b3b3;transform:scaleX(0.8711);transform-origin:0 50%;">O:</div>
<div class="t" style="left:543.8px;top:118.0px;font-size:8.7px;line-height:11px;letter-spacing:0.059px;color:#eba6b6;">162.19</div>
<div class="t" style="left:577.9px;top:118.0px;font-size:8.7px;line-height:11px;letter-spacing:-0.300px;color:#b3b3b3;">H:</div>
<div class="t" style="left:591.3px;top:118.0px;font-size:8.7px;line-height:11px;letter-spacing:0.059px;color:#eba6b6;">162.56</div>
<div class="t" style="left:625.8px;top:118.0px;font-size:8.7px;line-height:11px;letter-spacing:0.000px;color:#b3b3b3;transform:scaleX(0.8546);transform-origin:0 50%;">L:</div>
<div class="t" style="left:637.0px;top:118.0px;font-size:8.7px;line-height:11px;letter-spacing:0.079px;color:#eba6b6;">161.50</div>
<div class="t" style="left:671.0px;top:118.0px;font-size:8.7px;line-height:11px;letter-spacing:0.000px;color:#b3b3b3;transform:scaleX(0.9195);transform-origin:0 50%;">C:</div>
<div class="t" style="left:683.0px;top:118.0px;font-size:8.7px;line-height:11px;letter-spacing:0.059px;color:#eba6b6;">161.90</div>
<div class="t" style="left:717.8px;top:118.0px;font-size:8.7px;line-height:11px;letter-spacing:0.000px;color:#b3b3b3;transform:scaleX(0.9236);transform-origin:0 50%;">Δ:</div>
<div class="t" style="left:730.9px;top:118.0px;font-size:8.7px;line-height:11px;letter-spacing:-0.021px;color:#eba6b6;">161.90</div>
<svg style="left:232.6px;top:141.8px" width="12.4" height="9" viewBox="0 0 12.4 9"><path d="M.6 4.5 C2.4 1.2 4.4 .7 6.2 .7 C8 .7 10 1.2 11.8 4.5 C10 7.8 8 8.3 6.2 8.3 C4.4 8.3 2.4 7.8 .6 4.5Z" fill="none" stroke="#333" stroke-width="1.1"/><circle cx="6.2" cy="4.5" r="1.7" fill="#333"/></svg>
<svg style="left:232.0px;top:171.5px" width="14" height="12" viewBox="0 0 14 12"><path d="M3.7 10 L10.6 3.6" stroke="#333" stroke-width="3" stroke-linecap="round"/><path d="M4.1 9.7 L10 4.2" stroke="#e6e6e6" stroke-width=".9" stroke-linecap="round"/><path d="M10.1 2.3 L12 4.3" stroke="#f0f0f0" stroke-width=".7"/><path d="M11.5 2.7 L12.3 2" stroke="#333" stroke-width="3" stroke-linecap="butt"/><rect x="1.1" y="2.2" width="3.9" height="3.2" rx=".4" fill="#333"/><path d="M2 2.4 V1.7 A1.05 1.05 0 0 1 4.1 1.7 V2.4" fill="none" stroke="#333" stroke-width=".9"/></svg>
<div class="b" style="left:228.9px;top:198.8px;width:19.6px;height:20.0px;background:#b4d5ec;border-radius:2px;"></div>
<svg style="left:232.0px;top:202.1px" width="13.6" height="13.6" viewBox="0 0 13.6 13.6"><circle cx="6.8" cy="6.8" r="5.4" fill="none" stroke="#1c1c1c" stroke-width="1.4"/></svg>
<svg style="left:235.0px;top:234.5px" width="8" height="12" viewBox="0 0 8 12"><path d="M1.6 11 L6 1.1" stroke="#333" stroke-width="1.2" stroke-linecap="round"/></svg>
<svg style="left:232.4px;top:266.0px" width="12.6" height="10.6" viewBox="0 0 12.6 10.6"><path d="M.6 1.2H11.8 M.6 5.2H11.8 M.6 9.2H11.8 M1.4 9.2 L10.8 1.2" stroke="#333" stroke-width="1.05" fill="none"/></svg>
<svg style="left:232.0px;top:296.0px" width="13.4" height="13.4" viewBox="0 0 13.4 13.4"><path d="M.8 5.2 L5.2 .8 M.8 8.6 L8.6 .8 M2.4 10.4 L10.6 2.2" stroke="#333" stroke-width="1.1" stroke-linecap="round"/><path d="M12 8.4H9.6V12.4H12 M9.6 10.4H11.6" fill="none" stroke="#333" stroke-width="1"/></svg>
<div class="t" style="left:233.6px;top:325.5px;font-family:'Liberation Serif',serif;font-size:14.5px;line-height:16px;color:#333">T</div>
<svg style="left:232.4px;top:359.6px" width="12.4" height="11.4" viewBox="0 0 12.4 11.4"><g transform="rotate(-35 6.2 5.7)"><rect x="1" y="3" width="10.4" height="5.6" rx="1.2" fill="#333" stroke="#333" stroke-width="1"/><rect x="1.5" y="3.5" width="3.6" height="4.6" rx=".8" fill="#f0f0f0"/></g></svg>
<div class="b" style="left:238.3px;top:390.4px;width:1.0px;height:3.4px;background:#333;"></div>
<div class="b" style="left:1150.0px;top:112.0px;width:36.5px;height:523.5px;background:#f9f9f9;"></div>
<div class="b" style="left:1149.0px;top:112.0px;width:1.6px;height:523.5px;background:#e9e9e9;"></div>
<div class="b" style="left:1186.0px;top:81.5px;width:1.5px;height:638.5px;background:#e4e4e4;"></div>
<div class="b" style="left:1143.4px;top:133.3px;width:43.1px;height:10.6px;background:rgba(252,252,252,.85);"></div>
<div class="t" style="left:1151.8px;top:134.0px;font-size:8.7px;line-height:11px;letter-spacing:-0.021px;color:#666;">180.48</div>
<div class="b" style="left:1143.4px;top:183.5px;width:43.1px;height:10.6px;background:rgba(252,252,252,.85);"></div>
<div class="t" style="left:1151.8px;top:184.0px;font-size:8.7px;line-height:11px;letter-spacing:-0.021px;color:#666;">177.39</div>
<div class="b" style="left:1143.4px;top:236.3px;width:43.1px;height:10.6px;background:rgba(252,252,252,.85);"></div>
<div class="t" style="left:1151.8px;top:237.0px;font-size:8.7px;line-height:11px;letter-spacing:-0.021px;color:#666;">175.23</div>
<div class="b" style="left:1143.4px;top:291.0px;width:43.1px;height:10.6px;background:rgba(252,252,252,.85);"></div>
<div class="t" style="left:1151.8px;top:292.0px;font-size:8.7px;line-height:11px;letter-spacing:-0.021px;color:#666;">173.37</div>
<div class="b" style="left:1143.4px;top:500.0px;width:43.1px;height:10.6px;background:rgba(252,252,252,.85);"></div>
<div class="t" style="left:1151.8px;top:500.0px;font-size:8.7px;line-height:11px;letter-spacing:-0.021px;color:#666;">155.21</div>
<div class="b" style="left:1143.4px;top:545.9px;width:43.1px;height:10.6px;background:rgba(252,252,252,.85);"></div>
<div class="t" style="left:1153.6px;top:546.0px;font-size:8.7px;line-height:11px;letter-spacing:0.008px;color:#666;">68.83</div>
<div class="b" style="left:1143.4px;top:598.5px;width:43.1px;height:10.6px;background:rgba(252,252,252,.85);"></div>
<div class="t" style="left:1153.6px;top:599.0px;font-size:8.7px;line-height:11px;letter-spacing:0.008px;color:#666;">34.90</div>
<div class="b" style="left:1150.6px;top:256.8px;width:35.6px;height:11.2px;background:#d957d1;"></div>
<div class="t" style="left:1154.9px;top:258.0px;font-size:8.7px;line-height:11px;letter-spacing:0.139px;color:#1e1e1e;">174.90</div>
<div class="b" style="left:1150.6px;top:314.8px;width:35.6px;height:11.0px;background:#0f6fd0;"></div>
<div class="t" style="left:1154.9px;top:316.0px;font-size:8.7px;line-height:11px;letter-spacing:0.139px;color:#1e1e1e;">173.06</div>
<div class="b" style="left:1150.6px;top:334.8px;width:35.6px;height:11.4px;background:#565656;"></div>
<div class="t" style="left:1154.9px;top:336.0px;font-size:8.7px;line-height:11px;letter-spacing:0.139px;color:#1e1e1e;">172.82</div>
<div class="b" style="left:1150.6px;top:347.6px;width:35.6px;height:12.7px;background:#fff;box-sizing:border-box;border:1px solid #7fc47a;"></div>
<div class="t" style="left:1155.8px;top:349.0px;font-size:8.7px;line-height:11px;letter-spacing:0.139px;color:#1e1e1e;">172.44</div>
<div class="b" style="left:1150.6px;top:368.2px;width:35.6px;height:11.8px;background:#cc4d3a;"></div>
<div class="t" style="left:1154.9px;top:369.0px;font-size:8.7px;line-height:11px;letter-spacing:0.139px;color:#1e1e1e;">171.90</div>
<div class="b" style="left:1150.6px;top:391.0px;width:35.6px;height:11.5px;background:#f1b83e;"></div>
<div class="t" style="left:1154.9px;top:392.0px;font-size:8.7px;line-height:11px;letter-spacing:0.139px;color:#1e1e1e;">170.00</div>
<div class="b" style="left:1150.6px;top:421.0px;width:35.6px;height:12.7px;background:#fff;box-sizing:border-box;border:1px solid #ec8f8f;"></div>
<div class="t" style="left:1155.8px;top:423.0px;font-size:8.7px;line-height:11px;letter-spacing:0.139px;color:#1e1e1e;">164.45</div>
<div class="b" style="left:1150.6px;top:446.9px;width:35.6px;height:11.5px;background:#f1b83e;"></div>
<div class="t" style="left:1154.9px;top:448.0px;font-size:8.7px;line-height:11px;letter-spacing:0.139px;color:#1e1e1e;">160.00</div>
<div class="b" style="left:1150.6px;top:460.4px;width:35.6px;height:12.4px;background:#fff;box-sizing:border-box;border:1px solid #8fce8a;"></div>
<div class="t" style="left:1155.8px;top:462.0px;font-size:8.7px;line-height:11px;letter-spacing:0.139px;color:#1e1e1e;">158.12</div>
<div class="b" style="left:1150.6px;top:532.0px;width:35.6px;height:14.0px;background:#6b6b6b;"></div>
<div class="t" style="left:1157.2px;top:534.0px;font-size:8.7px;line-height:11px;letter-spacing:0.158px;color:#1e1e1e;">70.00</div>
<div class="b" style="left:1150.6px;top:572.4px;width:35.6px;height:11.2px;background:#6b6b6b;"></div>
<div class="t" style="left:1157.2px;top:573.0px;font-size:8.7px;line-height:11px;letter-spacing:0.158px;color:#1e1e1e;">50.00</div>
<div class="b" style="left:1150.6px;top:583.8px;width:35.6px;height:14.2px;background:#0f6fd0;"></div>
<div class="t" style="left:1157.2px;top:586.0px;font-size:8.7px;line-height:11px;letter-spacing:0.158px;color:#1e1e1e;">40.73</div>
<div class="b" style="left:1150.6px;top:610.0px;width:35.6px;height:14.0px;background:#6b6b6b;"></div>
<div class="t" style="left:1157.2px;top:612.0px;font-size:8.7px;line-height:11px;letter-spacing:0.158px;color:#1e1e1e;">30.00</div>
<div class="b" style="left:839.0px;top:336.4px;width:323.6px;height:32.2px;background:#dff0dc;box-sizing:border-box;border:1px solid #93cf8d;border-radius:3.5px;box-shadow:0 3px 9px rgba(0,0,0,.16);"></div>
<div class="b" style="left:840.0px;top:337.4px;width:28.7px;height:30.2px;background:#a9d8a4;border-radius:2.5px 0 0 2.5px;"></div>
<div class="b" style="left:868.2px;top:337.4px;width:1.0px;height:30.2px;background:#93cf8d;"></div>
<div class="t" style="left:846.8px;top:341.0px;font-size:19px;line-height:25px;letter-spacing:0.126px;color:#1c1c1c;font-weight:bold;">P</div>
<div class="b" style="left:958.5px;top:337.4px;width:1.0px;height:30.2px;background:#93cf8d;"></div>
<div class="t" style="left:876.0px;top:341.0px;font-size:20px;line-height:26px;letter-spacing:-0.029px;color:#1c1c1c;">5 shares</div>
<div class="b" style="left:1021.9px;top:337.4px;width:1.0px;height:30.2px;background:#93cf8d;"></div>
<div class="t" style="left:966.5px;top:341.0px;font-size:20px;line-height:26px;letter-spacing:0.300px;color:#1c1c1c;">Short</div>
<div class="t" style="left:1030.5px;top:344.0px;font-size:13.5px;line-height:18px;letter-spacing:-2.205px;color:#1c1c1c;">@</div>
<div class="t" style="left:1046.5px;top:341.0px;font-size:20px;line-height:26px;letter-spacing:0.267px;color:#1c1c1c;">350.46</div>
<div class="t" style="left:1117.0px;top:341.0px;font-size:20px;line-height:26px;letter-spacing:0.000px;color:#1c1c1c;transform:scaleX(0.9117);transform-origin:0 50%;">USD</div>
<div class="b" style="left:1005.0px;top:421.0px;width:150.8px;height:14.0px;background:#fadfdd;box-sizing:border-box;border:1px solid #f0a3a0;border-radius:1.5px;"></div>
<div class="b" style="left:1006.0px;top:422.0px;width:11.6px;height:12.0px;background:#f4b5b2;border-radius:0.5px 0 0 0.5px;"></div>
<div class="b" style="left:1017.1px;top:422.0px;width:1.0px;height:12.0px;background:#f0a3a0;"></div>
<div class="t" style="left:1009.2px;top:423.0px;font-size:8.5px;line-height:11px;letter-spacing:-0.327px;color:#222;font-weight:bold;">0</div>
<div class="b" style="left:1070.5px;top:422.0px;width:1.0px;height:12.0px;background:#f0a3a0;"></div>
<div class="t" style="left:1021.0px;top:422.0px;font-size:9px;line-height:12px;letter-spacing:0.043px;color:#222;">Partial 1/10</div>
<div class="b" style="left:1093.0px;top:422.0px;width:1.0px;height:12.0px;background:#f0a3a0;"></div>
<div class="t" style="left:1075.0px;top:422.0px;font-size:9px;line-height:12px;letter-spacing:-0.169px;color:#222;">Sell</div>
<div class="t" style="left:1097.0px;top:426.0px;font-size:6.5px;line-height:8px;letter-spacing:-1.599px;color:#222;">@</div>
<div class="t" style="left:1104.8px;top:422.0px;font-size:9px;line-height:12px;letter-spacing:0.055px;color:#222;">350.46</div>
<div class="t" style="left:1136.0px;top:422.0px;font-size:9px;line-height:12px;letter-spacing:0.000px;color:#222;transform:scaleX(0.8630);transform-origin:0 50%;">USD</div>
<div class="b" style="left:1009.0px;top:460.0px;width:145.2px;height:14.0px;background:#dff0dc;box-sizing:border-box;border:1px solid #93cf8d;border-radius:1.5px;"></div>
<div class="b" style="left:1010.0px;top:461.0px;width:10.8px;height:12.0px;background:#a9d8a4;border-radius:0.5px 0 0 0.5px;"></div>
<div class="b" style="left:1020.3px;top:461.0px;width:1.0px;height:12.0px;background:#93cf8d;"></div>
<div class="t" style="left:1012.4px;top:462.0px;font-size:8.5px;line-height:11px;letter-spacing:-0.670px;color:#222;font-weight:bold;">P</div>
<div class="b" style="left:1066.3px;top:461.0px;width:1.0px;height:12.0px;background:#93cf8d;"></div>
<div class="t" style="left:1024.6px;top:461.0px;font-size:9px;line-height:12px;letter-spacing:-0.069px;color:#222;">Filled 100</div>
<div class="b" style="left:1092.5px;top:461.0px;width:1.0px;height:12.0px;background:#93cf8d;"></div>
<div class="t" style="left:1070.8px;top:461.0px;font-size:9px;line-height:12px;letter-spacing:0.000px;color:#222;transform:scaleX(0.9391);transform-origin:0 50%;">Long</div>
<div class="t" style="left:1096.4px;top:465.0px;font-size:6.5px;line-height:8px;letter-spacing:-1.599px;color:#222;">@</div>
<div class="t" style="left:1103.8px;top:461.0px;font-size:9px;line-height:12px;letter-spacing:0.055px;color:#222;">200.00</div>
<div class="t" style="left:1134.6px;top:461.0px;font-size:9px;line-height:12px;letter-spacing:0.000px;color:#222;transform:scaleX(0.8736);transform-origin:0 50%;">USD</div>
<div class="b" style="left:256.0px;top:635.2px;width:930.5px;height:1.4px;background:#e2e2e2;"></div>
<div class="b" style="left:256.0px;top:636.6px;width:930.5px;height:21.2px;background:#fafafa;"></div>
<div class="b" style="left:223.5px;top:657.8px;width:963.0px;height:1.2px;background:#e4e4e4;"></div>
<div class="b" style="left:256.0px;top:659.0px;width:930.5px;height:61.0px;background:#fafafa;"></div>
<div class="t" style="left:369.5px;top:642.0px;font-size:8.7px;line-height:11px;letter-spacing:-0.276px;color:#6e6e6e;">24</div>
<div class="t" style="left:429.2px;top:642.0px;font-size:8.7px;line-height:11px;letter-spacing:-0.057px;color:#6e6e6e;">9 Nov</div>
<div class="t" style="left:501.9px;top:642.0px;font-size:8.7px;line-height:11px;letter-spacing:0.224px;color:#6e6e6e;">27</div>
<div class="t" style="left:562.0px;top:642.0px;font-size:8.7px;line-height:11px;letter-spacing:-0.073px;color:#6e6e6e;">12 Dec</div>
<div class="t" style="left:639.2px;top:642.0px;font-size:8.7px;line-height:11px;letter-spacing:-0.276px;color:#6e6e6e;">28</div>
<div class="t" style="left:699.5px;top:642.0px;font-size:8.7px;line-height:11px;letter-spacing:0.111px;color:#6e6e6e;">17 Jan 2024</div>
<div class="t" style="left:798.6px;top:642.0px;font-size:8.7px;line-height:11px;letter-spacing:-0.161px;color:#6e6e6e;">5 Feb</div>
<div class="t" style="left:870.0px;top:642.0px;font-size:8.7px;line-height:11px;letter-spacing:0.000px;color:#6e6e6e;transform:scaleX(0.9508);transform-origin:0 50%;">21</div>
<div class="t" style="left:929.8px;top:642.0px;font-size:8.7px;line-height:11px;letter-spacing:0.141px;color:#6e6e6e;">7 Mar</div>
<div class="t" style="left:1002.8px;top:642.0px;font-size:8.7px;line-height:11px;letter-spacing:-0.276px;color:#6e6e6e;">22</div>
<div class="t" style="left:1062.8px;top:642.0px;font-size:8.7px;line-height:11px;letter-spacing:0.097px;color:#6e6e6e;">9 Apr</div>
<div class="t" style="left:1134.3px;top:642.0px;font-size:8.7px;line-height:11px;letter-spacing:0.036px;color:#6e6e6e;">14 Jun</div>
<div class="t" style="left:311.5px;top:670.0px;font-size:10.3px;line-height:13px;letter-spacing:-0.166px;color:#4a4a4a;">1D</div>
<div class="t" style="left:336.8px;top:670.0px;font-size:10.3px;line-height:13px;letter-spacing:-0.107px;color:#4a4a4a;">1M</div>
<div class="t" style="left:362.0px;top:670.0px;font-size:10.3px;line-height:13px;letter-spacing:0.093px;color:#4a4a4a;">3M</div>
<div class="t" style="left:387.6px;top:670.0px;font-size:10.3px;line-height:13px;letter-spacing:0.293px;color:#4a4a4a;">6M</div>
<div class="t" style="left:413.6px;top:670.0px;font-size:10.3px;line-height:13px;letter-spacing:-0.007px;color:#4a4a4a;">9M</div>
<div class="t" style="left:439.3px;top:670.0px;font-size:10.3px;line-height:13px;letter-spacing:0.000px;color:#4a4a4a;transform:scaleX(0.9078);transform-origin:0 50%;">YTD</div>
<div class="t" style="left:492.8px;top:670.0px;font-size:10.3px;line-height:13px;letter-spacing:0.000px;color:#4a4a4a;transform:scaleX(0.9287);transform-origin:0 50%;">2Y</div>
<div class="t" style="left:516.8px;top:670.0px;font-size:10.3px;line-height:13px;letter-spacing:0.000px;color:#4a4a4a;transform:scaleX(0.9208);transform-origin:0 50%;">5Y</div>
<div class="t" style="left:540.6px;top:670.0px;font-size:10.3px;line-height:13px;letter-spacing:-0.313px;color:#4a4a4a;">10Y</div>
<div class="t" style="left:569.6px;top:670.0px;font-size:10.3px;line-height:13px;letter-spacing:-0.113px;color:#4a4a4a;">20Y</div>
<div class="t" style="left:599.6px;top:670.0px;font-size:10.3px;line-height:13px;letter-spacing:0.221px;color:#4a4a4a;">Max</div>
<div class="b" style="left:465.9px;top:666.0px;width:20.0px;height:19.8px;background:#b4d5ec;border-radius:2px;"></div>
<div class="t" style="left:469.6px;top:670.0px;font-size:10.1px;line-height:13px;letter-spacing:-0.154px;color:#1c1c1c;font-weight:bold;">1Y</div>
<div class="b" style="left:630.8px;top:666.0px;width:1.0px;height:19.8px;background:#e6e6e6;"></div>
<svg style="left:642.6px;top:669.6px" width="10" height="11" viewBox="0 0 10 11"><rect x="0.6" y="1.6" width="8.8" height="8.8" rx="1" fill="none" stroke="#3a3a3a" stroke-width="1.2"/><rect x="0.6" y="1.6" width="8.8" height="2.6" fill="#3a3a3a"/><path d="M2.8 0.2v2 M7.2 0.2v2" stroke="#3a3a3a" stroke-width="1.2"/><g fill="#3a3a3a"><rect x="2" y="5.4" width="1.2" height="1.2"/><rect x="4.4" y="5.4" width="1.2" height="1.2"/><rect x="6.8" y="5.4" width="1.2" height="1.2"/><rect x="2" y="7.6" width="1.2" height="1.2"/><rect x="4.4" y="7.6" width="1.2" height="1.2"/><rect x="6.8" y="7.6" width="1.2" height="1.2"/></g></svg>
<div class="b" style="left:1018.4px;top:666.0px;width:66.7px;height:19.4px;background:#f0f0f0;border-radius:2px;"></div>
<div class="t" style="left:1022.0px;top:670.0px;font-size:10.3px;line-height:13px;letter-spacing:-0.001px;color:#444;">Splits &amp; Divs</div>
<div class="b" style="left:1091.0px;top:666.0px;width:1.0px;height:19.4px;background:#e6e6e6;"></div>
<div class="b" style="left:1097.9px;top:666.0px;width:36.8px;height:19.4px;background:#f0f0f0;border-radius:2px;"></div>
<div class="t" style="left:1101.2px;top:670.0px;font-size:10.3px;line-height:13px;letter-spacing:0.154px;color:#444;">Linear</div>
<div class="b" style="left:1141.0px;top:666.0px;width:1.0px;height:19.4px;background:#e6e6e6;"></div>
<div class="b" style="left:1147.4px;top:666.0px;width:30.4px;height:19.4px;background:#b4d5ec;border-radius:2px;"></div>
<div class="t" style="left:1150.8px;top:670.0px;font-size:10.1px;line-height:13px;letter-spacing:0.068px;color:#1c1c1c;font-weight:bold;">Auto</div>
<div class="t" style="left:285.0px;top:514.0px;font-size:8.9px;line-height:12px;letter-spacing:0.194px;color:#666;">RSI (14,</div>
<div class="t" style="left:323.6px;top:514.0px;font-size:8.9px;line-height:12px;letter-spacing:-0.008px;color:#666;">close)</div>
<svg style="left:355.6px;top:515.2px" width="9" height="9" viewBox="0 0 9 9"><g transform="translate(4.5 4.5)"><path d="M-0.94 -3.06 L-0.82 -4.22 L0.82 -4.22 L0.94 -3.06 L2.18 -2.34 L3.25 -2.82 L4.07 -1.40 L3.12 -0.72 L3.12 0.72 L4.07 1.40 L3.25 2.82 L2.18 2.34 L0.94 3.06 L0.82 4.22 L-0.82 4.22 L-0.94 3.06 L-2.18 2.34 L-3.25 2.82 L-4.07 1.40 L-3.12 0.72 L-3.12 -0.72 L-4.07 -1.40 L-3.25 -2.82 L-2.18 -2.34Z" fill="none" stroke="#555" stroke-width=".75" stroke-linejoin="round"/><circle r="1.45" fill="none" stroke="#555" stroke-width=".75"/></g></svg>
<svg style="left:369.0px;top:515.8px" width="10" height="8.6" viewBox="0 0 10 8.6"><path d="M.5 4.3 C2 1.4 3.6 1 5 1 C6.4 1 8 1.4 9.5 4.3 C8 7.2 6.4 7.6 5 7.6 C3.6 7.6 2 7.2 .5 4.3Z" fill="none" stroke="#555" stroke-width=".8"/><circle cx="5" cy="4.3" r="1.6" fill="none" stroke="#555" stroke-width=".8"/><path d="M1.6 8 L8.4 .6" stroke="#555" stroke-width=".8"/></svg>
<svg style="left:384.0px;top:516.3px" width="7.4" height="7.4" viewBox="0 0 7.4 7.4"><path d="M.5 .5 L6.9 6.9 M6.9 .5 L.5 6.9" stroke="#555" stroke-width=".9"/></svg>
<div class="t" style="left:396.9px;top:515.0px;font-size:8.7px;line-height:11px;letter-spacing:-0.042px;color:#1f7fd0;">34.91</div>
<div class="b" style="left:126.7px;top:394.2px;width:196.4px;height:303.8px;background:rgba(255,255,255,.05);border-radius:6px;backdrop-filter:blur(10px);-webkit-backdrop-filter:blur(10px);"></div>
<div class="b" style="left:130.7px;top:398.2px;width:188.4px;height:295.8px;background:#f4f5f5;border-radius:3px;"></div>
<div class="b" style="left:130.7px;top:398.2px;width:188.4px;height:31.1px;background:#fdfdfd;border-radius:3px 3px 0 0;"></div>
<div class="b" style="left:131.9px;top:429.3px;width:176.1px;height:33.0px;background:#e4eef8;"></div>
<div class="b" style="left:131.9px;top:495.8px;width:176.1px;height:32.7px;background:#e2e2e2;"></div>
<div class="b" style="left:310.3px;top:435.9px;width:4.7px;height:40.3px;background:#c6c6c6;border-radius:2.4px;"></div>
<svg style="left:144.6px;top:407.6px" width="13" height="13" viewBox="0 0 13 13"><circle cx="6.3" cy="6.3" r="5.1" fill="none" stroke="#1f7fd8" stroke-width="1.3"/></svg>
<div class="t" style="left:163.3px;top:405.0px;font-size:14.8px;line-height:19px;letter-spacing:-0.115px;color:#333;">Dot</div>
<svg style="left:200.4px;top:411.0px" width="9.2" height="6.2" viewBox="0 0 9.2 6.2"><path d="M.8 5.4 L4.6 1.4 L8.4 5.4" fill="none" stroke="#666" stroke-width="1.1"/></svg>
<div class="t" style="left:171.6px;top:436.0px;font-size:15.4px;line-height:20px;letter-spacing:0.000px;color:#1a1a1a;font-weight:bold;transform:scaleX(0.9394);transform-origin:0 50%;">Dot</div>
<div class="t" style="left:171.6px;top:469.0px;font-size:15.8px;line-height:21px;letter-spacing:-0.429px;color:#1f1f1f;">Square</div>
<div class="t" style="left:171.6px;top:502.0px;font-size:15.8px;line-height:21px;letter-spacing:-0.088px;color:#1f1f1f;">Diamond</div>
<div class="t" style="left:171.6px;top:535.0px;font-size:15.8px;line-height:21px;letter-spacing:-0.074px;color:#1f1f1f;">Arrow up</div>
<div class="t" style="left:171.6px;top:568.0px;font-size:15.8px;line-height:21px;letter-spacing:0.054px;color:#1f1f1f;">Arrow down</div>
<div class="t" style="left:171.7px;top:602.0px;font-size:15.8px;line-height:21px;letter-spacing:0.153px;color:#1f1f1f;">Arrow left</div>
<div class="t" style="left:171.7px;top:635.0px;font-size:15.8px;line-height:21px;letter-spacing:0.122px;color:#1f1f1f;">Arrow right</div>
<div class="t" style="left:171.7px;top:668.0px;font-size:15.8px;line-height:21px;letter-spacing:0.052px;color:#1f1f1f;">Custom arrow</div>
<svg style="left:145.0px;top:440.6px" width="11" height="11" viewBox="0 0 11 11"><circle cx="5.4" cy="5.4" r="4.05" fill="none" stroke="#2a2a2a" stroke-width="1.6"/></svg>
<svg style="left:145.6px;top:474.4px" width="10" height="10" viewBox="0 0 10 10"><rect x="1.1" y="1.1" width="7.1" height="7.1" fill="none" stroke="#2a2a2a" stroke-width="1.2"/></svg>
<svg style="left:144.6px;top:506.4px" width="11.6" height="11.6" viewBox="0 0 11.6 11.6"><path d="M5.7 1 L10.4 5.7 L5.7 10.4 L1 5.7 Z" fill="none" stroke="#2a2a2a" stroke-width="1.4"/></svg>
<svg style="left:144.8px;top:540.0px" width="11.2" height="11" viewBox="0 0 11.2 11"><path d="M5.6 .9 L10.2 5.6 H7.6 V10 H3.6 V5.6 H1 Z" fill="none" stroke="#2a2a2a" stroke-width="1.1" stroke-linejoin="round"/></svg>
<svg style="left:144.8px;top:572.6px" width="11.2" height="11" viewBox="0 0 11.2 11"><g transform="rotate(180 5.6 5.5)"><path d="M5.6 .9 L10.2 5.6 H7.6 V10 H3.6 V5.6 H1 Z" fill="none" stroke="#2a2a2a" stroke-width="1.1" stroke-linejoin="round"/></g></svg>
<svg style="left:144.8px;top:606.0px" width="11.2" height="11" viewBox="0 0 11.2 11"><g transform="rotate(-90 5.6 5.5)"><path d="M5.6 .9 L10.2 5.6 H7.6 V10 H3.6 V5.6 H1 Z" fill="none" stroke="#2a2a2a" stroke-width="1.1" stroke-linejoin="round"/></g></svg>
<svg style="left:144.8px;top:639.2px" width="11.2" height="11" viewBox="0 0 11.2 11"><g transform="rotate(90 5.6 5.5)"><path d="M5.6 .9 L10.2 5.6 H7.6 V10 H3.6 V5.6 H1 Z" fill="none" stroke="#2a2a2a" stroke-width="1.1" stroke-linejoin="round"/></g></svg>
<svg style="left:145.0px;top:670.0px" width="11" height="16" viewBox="0 0 11 16"><path d="M1 .8 L1 12 L3.8 9.4 L5.8 14.4 L7.8 13.6 L5.8 8.8 L9.8 8.8 Z" fill="none" stroke="#2a2a2a" stroke-width="1.1" stroke-linejoin="round"/></svg>
<svg style="left:281.0px;top:439.0px" width="17" height="14" viewBox="0 0 17 14"><path d="M1.4 7.6 L5.8 12 L15.6 1.6" fill="none" stroke="#1f7fd8" stroke-width="2"/></svg>
</div></body></html>
